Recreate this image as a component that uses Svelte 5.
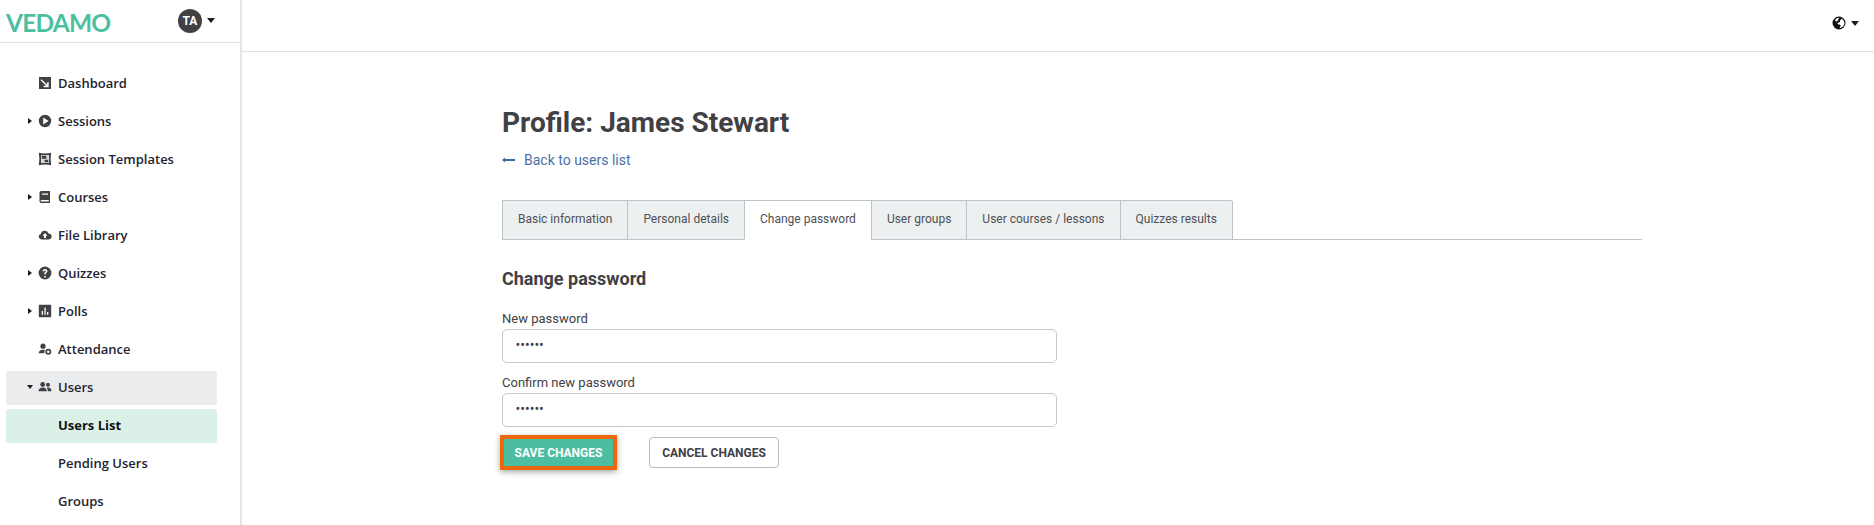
<script>
  const nav = [
    { label: 'Dashboard', icon: 'dash' },
    { label: 'Sessions', icon: 'play', caret: 'right' },
    { label: 'Session Templates', icon: 'tpl' },
    { label: 'Courses', icon: 'book', caret: 'right' },
    { label: 'File Library', icon: 'cloud' },
    { label: 'Quizzes', icon: 'quiz', caret: 'right' },
    { label: 'Polls', icon: 'poll', caret: 'right' },
    { label: 'Attendance', icon: 'att' },
    { label: 'Users', icon: 'users', caret: 'down', cls: 'open' },
    { label: 'Users List', cls: 'current' },
    { label: 'Pending Users' },
    { label: 'Groups' }
  ];
  const tabs = ['Basic information', 'Personal details', 'Change password', 'User groups', 'User courses / lessons', 'Quizzes results'];
</script>

<div class="page">
  <aside class="side">
    <div class="brand">
      <span class="logo">VEDAMO</span>
      <span class="avatar">TA</span>
      <span class="caret big"></span>
    </div>
    <nav class="nav">
      {#each nav as item}
        <div class="row {item.cls ?? ''}">
          <span class="arrow">
            {#if item.caret === 'right'}<span class="c-right"></span>{/if}
            {#if item.caret === 'down'}<span class="c-down"></span>{/if}
          </span>
          <span class="ico">
            {#if item.icon}
              <svg viewBox="0 0 14 14" width="14" height="14" fill="#3f4145">
                {#if item.icon === 'dash'}
                  <path d="M1 1h12v12H1z" /><path d="M3.500 3.200l5.600 5.600V6.200h1.600v5.100H5.600V9.700h2.600L2.500 4.200z" fill="#fff" />
                {:else if item.icon === 'play'}
                  <path fill-rule="evenodd" d="M7 .8a6.200 6.200 0 1 0 0 12.400A6.200 6.200 0 0 0 7 .8zM5.200 3.600l5.400 3.400-5.400 3.400z" />
                {:else if item.icon === 'tpl'}
                  <path fill-rule="evenodd" d="M.8.8Q7 2 13.200.8 12 7 13.200 13.200 7 12 .8 13.200 2 7 .8.8zM3 3v8h8V3z" /><path d="M3 3h8v8H3z" fill="#8a8c90" opacity=".3" /><path d="M3.800 3.800h4.600v3H3.800zM6.500 7.800h3.700v2.400H6.500z" />
                {:else if item.icon === 'book'}
                  <path fill-rule="evenodd" d="M3.200 1H12v12H3.200A1.700 1.700 0 0 1 1.500 11.300V2.700A1.700 1.700 0 0 1 3.200 1zM4 3.500v1.200h6V3.500zM3.400 10a.8.8 0 0 0 0 1.600H10.800V10z" />
                {:else if item.icon === 'cloud'}
                  <path fill-rule="evenodd" d="M7 2.700a3.700 3.700 0 0 1 3.500 2.700 3 3 0 0 1 .2 6H3.300a2.800 2.800 0 0 1-.5-5.500A4 4 0 0 1 7 2.700zM7 5L4.500 7.700H6V10h2V7.700h1.500z" />
                {:else if item.icon === 'quiz'}
                  <path fill-rule="evenodd" d="M7 .6a6.400 6.400 0 1 0 0 12.800A6.400 6.400 0 0 0 7 .6zM6.200 10h1.600v1.500H6.200zM4.600 5.200C4.700 3.800 5.700 3 7 3c1.400 0 2.400.8 2.400 2.100 0 1-.6 1.500-1.100 1.900-.4.300-.6.500-.6 1.100v.4H6.300v-.6c0-1 .5-1.500 1-1.900.4-.3.600-.5.600-.9S7.500 4.400 7 4.400s-.9.400-.9 1z" />
                {:else if item.icon === 'poll'}
                  <path fill-rule="evenodd" d="M1.700.8h10.600a.9.9 0 0 1 .9.9v10.600a.9.9 0 0 1-.9.9H1.700a.9.9 0 0 1-.9-.9V1.700a.9.900 0 0 1 .9-.9zM3.700 7v3.700h1.300V7zM6.400 3.500v7.200h1.300V3.500zM9 8v2.700h1.300V8z" />
                {:else if item.icon === 'att'}
                  <circle cx="5" cy="4.200" r="2.600" /><path d="M.7 11.300C.7 9 2.500 7.700 5 7.700c.8 0 1.500.1 2.100.4a3.500 3.500 0 0 0-.7 3.200z" /><path fill-rule="evenodd" d="M10.300 6.800a3 3 0 1 0 0 6 3 3 0 0 0 0-6zm0 1.700a1.300 1.300 0 1 1 0 2.600 1.300 1.300 0 0 1 0-2.600z" />
                {:else if item.icon === 'users'}
                  <circle cx="4.700" cy="4.500" r="2.400" /><circle cx="10" cy="4.800" r="2" /><path d="M.5 11.300c0-2.200 1.800-3.700 4.200-3.700s4.200 1.500 4.200 3.700zM9.900 11.300c0-1.500-.4-2.600-1.200-3.400.5-.2 1-.3 1.500-.3 1.900 0 3.300 1.300 3.300 3.700z" />
                {/if}
              </svg>
            {/if}
          </span>
          <span class="label">{item.label}</span>
        </div>
      {/each}
    </nav>
  </aside>

  <main class="main">
    <header class="top">
      <svg class="globe" viewBox="0 0 14 14" width="14" height="14">
        <circle cx="7" cy="7" r="6.500" fill="#111" />
        <path d="M6.800 1.800c-1.500.2-3 1.100-3.800 2.400.6.900 1.200 1.200 2 1.200.7-.6.600-1.400 1.300-1.900.6-.4.900-1 .5-1.700zM9.700 2.700c-.4.900-1.400 1-1.700 1.800-.3.800.4 1.300-.3 1.800-.8.400-1.500.1-2 .7-.4.700.2 1.300 1 1.500.8.200 1.900.2 1.900 1.100 0 .9-.6 1.800-1 2.400 2.700-.2 4.800-2.500 4.800-5.100 0-1.500-1.100-3.200-2.700-4.200z" fill="#fff" />
      </svg>
      <span class="caret"></span>
    </header>
    <section class="content">
      <h1>Profile: James Stewart</h1>
      <a class="back" href="#top">
        <svg viewBox="0 0 13 6" width="13" height="6"><path d="M0 3l3-2.400V2h10v2H3v1.400z" fill="#3f6aa3" /></svg>
        <span>Back to users list</span>
      </a>
      <div class="tabs">
        {#each tabs as t, i}
          <div class="tab" class:active={i === 2}>{t}</div>
        {/each}
      </div>
      <h2>Change password</h2>
      <div class="form">
        <label class="field">
          <span>New password</span>
          <div class="input">••••••</div>
        </label>
        <label class="field second">
          <span>Confirm new password</span>
          <div class="input">••••••</div>
        </label>
      </div>
      <div class="actions">
        <button class="save">SAVE CHANGES</button>
        <button class="cancel">CANCEL CHANGES</button>
      </div>
    </section>
  </main>
</div>

<style>
  :global(body) { margin: 0; background: #fff; }
  .page {
    display: grid;
    grid-template-columns: 242px 1fr;
    height: 525px;
    overflow: hidden;
    font-family: Roboto, sans-serif;
    color: #3f4145;
  }
  .side { border-right: 2px solid #e3e4e6; box-sizing: content-box; width: 240px; }
  .brand {
    height: 42px;
    border-bottom: 1px solid #e0e1e3;
    display: flex;
    align-items: center;
    box-sizing: content-box;
    padding-left: 6px;
    width: 236px;
  }
  .logo {
    font-family: Lato, sans-serif;
    font-weight: 700;
    font-size: 24.500px;
    letter-spacing: -0.800px;
    color: #4dbfa0;
    width: 172px;
    padding-top: 2px;
  }
  .avatar {
    width: 24px; height: 24px; border-radius: 50%;
    background: #3f4145; color: #fff;
    font-size: 12px; font-weight: 700;
    display: flex; align-items: center; justify-content: center;
    font-family: Roboto, sans-serif;
  }
  .caret {
    display: inline-block;
    border-left: 4.500px solid transparent;
    border-right: 4.500px solid transparent;
    border-top: 5px solid #1d1d1f;
  }
  .caret.big { margin-left: 5px; margin-top: -1px; }
  .nav { padding: 24px 0 0 6px; display: flex; flex-direction: column; gap: 4px; width: 211px; }
  .row {
    box-sizing: border-box;
    height: 34px;
    padding-bottom: 2px;
    display: flex;
    align-items: center;
    flex: none;
    border-radius: 2px;
    font-family: "Open Sans", sans-serif;
    font-size: 13px;
    font-weight: 600;
    color: #1f2430;
  }
  .row.open { background: #ebecee; }
  .row.current { background: #dbf1e8; font-weight: 700; color: #111; }
  .arrow { width: 32px; padding-left: 22px; box-sizing: border-box; display: flex; align-items: center; height: 10px; }
  .c-right { border-left: 4px solid #1d1d1f; border-top: 3.500px solid transparent; border-bottom: 3.500px solid transparent; }
  .c-down { margin-left: -1px; border-top: 4px solid #1d1d1f; border-left: 3.500px solid transparent; border-right: 3.500px solid transparent; }
  .ico { width: 14px; height: 14px; margin-right: 6px; display: block; }
  .ico svg { display: block; }
  .main { min-width: 0; }
  .top {
    border-bottom: 1px solid #e0e1e3;
    display: flex;
    justify-content: flex-end;
    align-items: flex-start;
    gap: 5px;
    padding: 16px 15px 0 0;
    box-sizing: content-box;
    height: 35px;
  }
  .top .caret { margin-top: 5px; }
  .content { padding: 0 232px 0 260px; }
  h1 { margin: 0; padding-top: 52px; font-size: 28px; line-height: 38px; font-weight: 700; color: #3f4145; }
  .back { display: flex; align-items: center; gap: 9px; margin-top: 8px; height: 20px; color: #4a6fa5; font-size: 14px; text-decoration: none; }
  .tabs { margin-top: 30px; display: flex; border-bottom: 1px solid #bfc3c7; height: 40px; box-sizing: border-box; }
  .tab {
    box-sizing: border-box;
    height: 40px;
    padding: 0 15px;
    line-height: 37px;
    font-size: 12px;
    background: #ecf0f1;
    border: 1px solid #bfc3c7;
    margin-left: -1px;
    color: #4c5056;
  }
  .tab:first-child { margin-left: 0; }
  .tab:last-child { border-radius: 0 2px 0 0; }
  .tab.active { background: #fff; border-bottom-color: #fff; }
  h2 { margin: 27px 0 0; font-size: 18px; line-height: 24px; font-weight: 700; color: #3f4145; }
  .form { width: 555px; margin-top: 19px; }
  .field { display: block; }
  .field > span { display: block; font-size: 13px; line-height: 18px; color: #3f4145; }
  .field.second { margin-top: 11px; }
  .input {
    box-sizing: border-box;
    height: 34px;
    margin-top: 1px;
    border: 1px solid #c6c8cb;
    border-radius: 5px;
    padding: 0 12.500px;
    line-height: 30px;
    font-size: 14px;
    color: #3f4145;
  }
  .actions { display: flex; align-items: center; margin-top: 8px; margin-left: -2px; gap: 32px; }
  button { font-family: Roboto, sans-serif; font-size: 12px; font-weight: 700; cursor: pointer; }
  .save {
    box-sizing: border-box;
    width: 117px; height: 35px;
    border: 4px solid #ec670d;
    background: #4dbd9f;
    color: #fff;
    padding: 0;
    box-shadow: 0 2px 6px rgba(0,0,0,.35);
  }
  .cancel {
    box-sizing: border-box;
    width: 130px; height: 31px;
    border: 1px solid #b9bcc1;
    border-radius: 4px;
    background: #fff;
    color: #3f4145;
    padding: 0;
  }
</style>
